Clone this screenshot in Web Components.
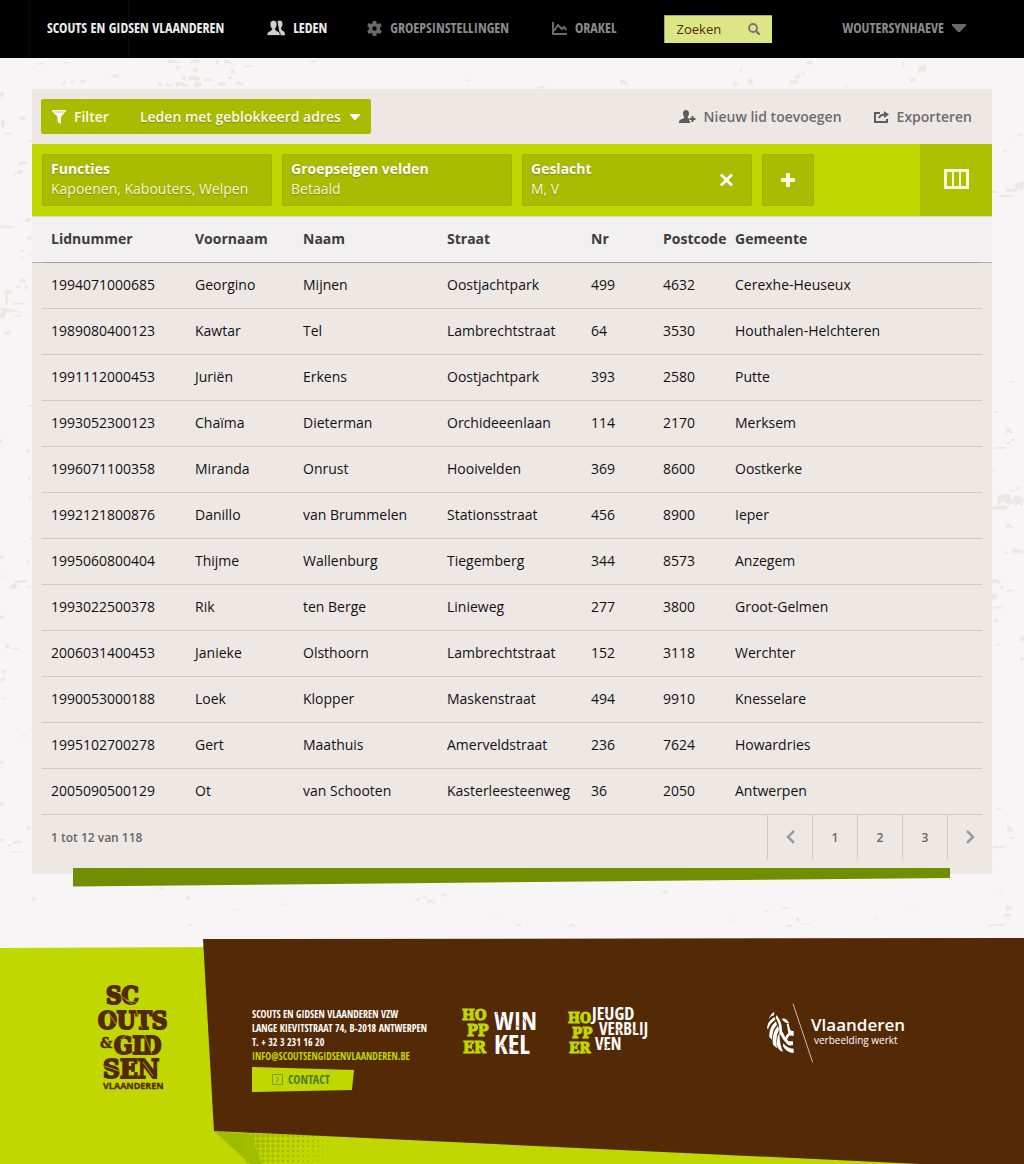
<!DOCTYPE html>
<html lang="nl">
<head>
<meta charset="utf-8">
<meta name="viewport" content="width=device-width, initial-scale=1">
<title>Scouts en Gidsen Vlaanderen - Leden</title>
<style>
html{height:100%}
body{margin:0;min-height:100%;background:#f7f5f6;font-family:"Open Sans","Noto Sans",sans-serif;font-size:14px;line-height:20px;color:#111;
--narrow:"Liberation Sans Narrow","Open Sans Condensed","Roboto Condensed","DejaVu Sans Condensed",sans-serif;
--lime:#c0d800;--olive:#a9bc00;--sand:#ede8e4;--brown:#542906}
</style>
</head>
<body>
<members-page></members-page>
<script>
const define=(name,html,setup)=>{
  const t=document.createElement('template');
  t.innerHTML='<style>*{box-sizing:border-box}button,input,select{font:inherit;color:inherit;margin:0;border:0;background:none;padding:0}button{cursor:pointer}a{color:inherit;text-decoration:none}svg{display:block;flex:none}</style>'+html;
  customElements.define(name,class extends HTMLElement{
    constructor(){super();this.attachShadow({mode:'open'}).append(t.content.cloneNode(true));}
    connectedCallback(){if(setup)setup(this,this.shadowRoot);}
  });
};

/* One menu entry: icon slot followed by its label */
define('nav-item',`<style>
:host{display:block;color:#8c8c8c}
:host([active]){color:#eee}
a{display:flex;align-items:center;gap:8px;white-space:nowrap}
</style><a href="#"><slot name="icon"></slot><slot></slot><slot name="after"></slot></a>`);

define('search-box',`<style>
:host{display:block}
form{display:flex;align-items:center;width:108px;height:28px;background:#dde685;border-top:1px solid #a6ad5c;border-left:1px solid #a6ad5c;padding:0 12px 2px;color:#542906;font:500 13px/20px "Open Sans",sans-serif}
input{flex:1;min-width:0;width:0;outline:0}
input::placeholder{color:#542906;opacity:1}
button{color:#777}
</style><form><input type="search" placeholder="Zoeken" aria-label="Zoeken"><button type="button" aria-label="Zoek"><svg width="12" height="12" viewBox="0 0 12 12" fill="none" stroke="currentColor"><circle cx="5" cy="5" r="4" stroke-width="1.8"/><path d="M8 8l3 3" stroke-width="2.4" stroke-linecap="round"/></svg></button></form>`);

define('top-bar',`<style>
:host{display:block;background:linear-gradient(90deg,#000 29px,#0c0c0c 29px 30px,#000 30px 128px,#0c0c0c 128px 129px,#000 129px)}
nav{display:flex;align-items:center;height:58px;padding:0 58px 2px 47px;font:bold 14px/20px var(--narrow);text-transform:uppercase}
.leden{margin-left:43px}.groep{margin-left:40px}.orakel{margin-left:43px}
search-box{margin-left:47px;text-transform:none;padding-top:2px}
.user{margin-left:auto}
</style><nav>
<nav-item active>Scouts en Gidsen Vlaanderen</nav-item>
<nav-item active class="leden"><svg slot="icon" width="18" height="16" viewBox="0 0 18 16" fill="#d0d0d0"><path d="M10.500 1.500c2-2 5-.8 5 2.200 0 2-.6 3.300-1.500 4.300.2 2 1.200 2.400 2.600 3.200 1 .6 1.400 1.800 1.400 4h-5z"/><path stroke="#000" stroke-width=".8" d="M3 4c0-5 7-5 7 0 0 2.300-.7 3.700-1.700 4.700 0 1.500.7 1.800 2.700 2.600 2 .8 2.200 2 2.200 4.200H0c0-2.200.4-3.400 2.200-4.200 1.800-.8 2.600-1.100 2.600-2.600C3.700 7.700 3 6.300 3 4z"/></svg>Leden</nav-item>
<nav-item class="groep"><svg slot="icon" width="15" height="15" viewBox="0 0 15 15" fill="#6a6a6a"><path fill-rule="evenodd" d="M5.800 0h3.400l.5 2.500 1.200.6 2.200-1.200 1.700 2.900L13 6.500v2l1.800 1.700-1.700 2.900-2.200-1.200-1.200.6-.5 2.500H5.800l-.5-2.500-1.200-.6-2.200 1.200-1.700-2.900L2 8.500v-2L.2 4.800l1.700-2.900 2.200 1.200 1.200-.6zM7.500 5.300a2.200 2.200 0 100 4.400 2.200 2.200 0 000-4.400z"/></svg>Groepsinstellingen</nav-item>
<nav-item class="orakel"><svg slot="icon" width="15" height="13" viewBox="0 0 15 13" fill="none" stroke="#6a6a6a" stroke-width="2"><path d="M1 0v12h14"/><path d="M2 9l4-6 4 4 2-2 2.500 3"/></svg>Orakel</nav-item>
<search-box></search-box>
<nav-item class="user">woutersynhaeve<svg slot="after" width="14" height="8" viewBox="0 0 14 8" fill="#6a6a6a"><path d="M0 0h14v1.500L8 8H6L0 1.500z"/></svg></nav-item>
</nav>`);

/* Panel header with the saved filter picker and the list actions */
define('list-toolbar',`<style>
:host{display:flex;align-items:center;justify-content:space-between;height:55px;padding:0 20px 0 9px;font-weight:600}
.picker{display:flex;align-items:center;height:35px;background:var(--olive);border-radius:2px;color:#fbfcee;text-shadow:0 1px 1px #7d8b00}
.filter{display:flex;align-items:center;gap:8px;padding:0 11px;height:35px}
.saved{position:relative;display:flex;align-items:center}
select{appearance:none;height:35px;width:251px;padding:0 30px 0 20px;text-shadow:inherit}
option{color:#111}
.saved svg{position:absolute;right:11px;pointer-events:none}
.actions{display:flex;gap:32px;color:#6c6c6c}
.actions button{display:flex;align-items:center;gap:8px}
</style>
<div class="picker"><button class="filter"><svg width="14" height="14" viewBox="0 0 14 14" fill="#fff"><path d="M0 0h14v1L9 7v7l-3.500-2V7L0 1z"/><path d="M2 2h10" stroke="#a9bc00" stroke-width=".7"/></svg>Filter</button>
<div class="saved"><select aria-label="Opgeslagen filter"><option>Leden met geblokkeerd adres</option></select><svg width="10" height="6" viewBox="0 0 10 6" fill="#fff"><path d="M0 0h10v1L5.500 6h-1L0 1z"/></svg></div></div>
<div class="actions">
<button><svg width="17" height="13" viewBox="0 0 17 13" fill="#5c5c5c"><path d="M4 3c0-4 6-4 6 0 0 2-.6 3-1.300 4 0 1 .6 1.300 2.300 2v4H0c0-2 .3-3 1.800-3.600C3.800 8.600 5.300 8.500 5.300 7 4.500 6 4 5 4 3z"/><path d="M14 5v8M10 9h7" stroke="#ede8e4" stroke-width="4"/><path d="M13.500 6v6M10.500 9h6" stroke="#5c5c5c" stroke-width="2"/></svg>Nieuw lid toevoegen</button>
<button><svg width="15" height="12" viewBox="0 0 15 12" fill="none" stroke="#5c5c5c" stroke-width="2"><path d="M6 2H1v9h12V8" /><path d="M5 7c1-2.500 3-3.500 6-3.500" stroke-width="2"/><path d="M10 0l5 3.500L10 7z" fill="#5c5c5c" stroke="none"/></svg>Exporteren</button></div>`);

define('filter-chip',`<style>
:host{display:flex;align-items:center;width:230px;height:52px;padding:0 18px 0 9px;background:var(--olive);border-radius:2px;color:#fff;box-shadow:inset 0 0 0 1px #a1b300;text-shadow:0 1px 1px #7d8b00}
div{flex:1;white-space:nowrap;padding-bottom:2px}
b,span{display:block}
span{color:#f7f9dc}
</style><div><b><slot name="title"></slot></b><span><slot></slot></span></div><slot name="close"></slot>`);

define('filter-strip',`<style>
:host{display:flex;justify-content:space-between;height:72px;background:var(--lime)}
.chips{display:flex;gap:10px;padding:10px}
button{display:grid;place-items:center}
.add{width:52px;height:52px;background:var(--olive);border-radius:2px;box-shadow:inset 0 0 0 1px #a1b300}
.cols{width:72px;height:72px;padding-bottom:2px;background:#acc000}
</style><div class="chips">
<filter-chip><span slot="title">Functies</span>Kapoenen, Kabouters, Welpen</filter-chip>
<filter-chip><span slot="title">Groepseigen velden</span>Betaald</filter-chip>
<filter-chip><span slot="title">Geslacht</span>M, V<button slot="close" aria-label="Verwijder"><svg width="15" height="14" viewBox="0 0 15 14"><path d="M2 1.500l11 11M13 1.500l-11 11" stroke="#fff" stroke-width="3"/></svg></button></filter-chip>
<button class="add" aria-label="Filter toevoegen"><svg width="14" height="14" viewBox="0 0 14 14"><path d="M7 0v14M0 7h14" stroke="#f6f9dc" stroke-width="4"/></svg></button></div>
<button class="cols" aria-label="Kolommen"><svg width="25" height="20" viewBox="0 0 25 20" fill="none" stroke="#f6f9dc"><path d="M1.500 1.500h22v17h-22z" stroke-width="3"/><path d="M9 2v16M16 2v16" stroke-width="2"/></svg></button>`);

define('member-table',`<style>
:host{display:block;padding:0 10px;background:linear-gradient(#dcdad8 1px,#f2f0f1 1px 46px,#b4b4b4 46px 47px,transparent 47px)}
table{width:100%;border-collapse:separate;border-spacing:0;table-layout:fixed}
th,td{padding:0 0 0 9px;text-align:left;white-space:nowrap}
th{height:47px;color:#3c3c3c;font-weight:700;border-bottom:1px solid #a0a0a0}
td{height:46px;padding-bottom:2px;border-bottom:1px solid #cbc9c6}
.c0{width:144px}.c1{width:108px}.c2{width:144px}.c3{width:144px}.c4{width:72px}.c5{width:72px}
</style><table><colgroup><col class="c0"><col class="c1"><col class="c2"><col class="c3"><col class="c4"><col class="c5"><col></colgroup><thead><tr></tr></thead><tbody></tbody></table>`,(el,root)=>{
  const fill=(row,tag,text)=>{for(const s of text.split('|')){const c=document.createElement(tag);c.textContent=s;if(tag==='th')c.scope='col';row.append(c);}};
  fill(root.querySelector('thead tr'),'th','Lidnummer|Voornaam|Naam|Straat|Nr|Postcode|Gemeente');
  const body=root.querySelector('tbody');
  for(const line of [
    '1994071000685|Georgino|Mijnen|Oostjachtpark|499|4632|Cerexhe-Heuseux',
    '1989080400123|Kawtar|Tel|Lambrechtstraat|64|3530|Houthalen-Helchteren',
    '1991112000453|Juriën|Erkens|Oostjachtpark|393|2580|Putte',
    '1993052300123|Chaïma|Dieterman|Orchideeenlaan|114|2170|Merksem',
    '1996071100358|Miranda|Onrust|Hooivelden|369|8600|Oostkerke',
    '1992121800876|Danillo|van Brummelen|Stationsstraat|456|8900|Ieper',
    '1995060800404|Thijme|Wallenburg|Tiegemberg|344|8573|Anzegem',
    '1993022500378|Rik|ten Berge|Linieweg|277|3800|Groot-Gelmen',
    '2006031400453|Janieke|Olsthoorn|Lambrechtstraat|152|3118|Werchter',
    '1990053000188|Loek|Klopper|Maskenstraat|494|9910|Knesselare',
    '1995102700278|Gert|Maathuis|Amerveldstraat|236|7624|Howardries',
    '2005090500129|Ot|van Schooten|Kasterleesteenweg|36|2050|Antwerpen'])
    fill(body.insertRow(),'td',line);
});

define('page-nav',`<style>
:host{display:flex;align-items:center;justify-content:space-between;height:44px;margin-bottom:15px;padding-left:19px;font-size:12px;font-weight:600;color:#666}
nav{display:flex}
span,a{padding-top:2px}
button,a{display:grid;place-items:center;width:45px;height:44px;border-left:1px solid #cbc9c6}
</style><span>1 tot 12 van 118</span><nav aria-label="Pagina's">
<button aria-label="Vorige"><svg width="11" height="14" viewBox="0 0 11 14" fill="none"><path d="M9 2L3 8l6 5.500" stroke="#fff" stroke-width="2"/><path d="M9 1L3 7l6 6" stroke="#999" stroke-width="2.500"/></svg></button>
<a href="#">1</a><a href="#">2</a><a href="#">3</a>
<button aria-label="Volgende"><svg width="11" height="14" viewBox="0 0 11 14" fill="none"><path d="M2 2l6 6-6 5.500" stroke="#fff" stroke-width="2"/><path d="M2 1l6 6-6 6" stroke="#999" stroke-width="2.500"/></svg></button></nav>`);

/* Flecks of worn paint on the page background */
define('paint-flecks',`<style>:host{position:absolute;inset:58px 0 auto;z-index:-1}svg{width:100%;height:880px}</style><svg viewBox="0 0 1024 880" preserveAspectRatio="none"><g fill="#ece7e5"></g></svg>`,(el,root)=>{
  const g=root.querySelector('g');
  /* x, y, width, height, slope */
  const spots=[
  [38,5,7,2,1],[63,4,7,2,-1],[111,16,8,5,-4],[62,23,4,5,-2],[71,23,4,3,0],[80,22,6,4,1],
  [167,2,13,4,2],[190,2,10,4,-2],[176,8,4,4,1],[190,10,8,5,-5],[188,18,12,6,2],[158,25,4,5,0],[165,26,8,3,1],[175,24,14,6,4],[182,18,4,5,0],[194,25,8,5,0],[204,20,9,4,2],[216,3,3,5,0],[224,2,8,5,3],[231,11,5,7,4],[228,19,4,3,0],[218,24,8,5,-1],[236,24,8,4,1],[245,7,8,3,-1],[310,3,7,2,0],[466,22,6,1,0],
  [536,28,9,3,-3],[620,22,9,6,5],[740,10,2,5,0],[733,25,5,4,1],[748,20,5,9,4],[790,22,8,6,-1],[794,17,6,5,-2],[801,15,4,2,0],[806,3,7,5,-1],[902,4,3,6,1],[918,8,9,8,-2],[910,20,6,6,-1],[843,28,6,1,0],
  [0,34,4,7,0],[1,62,4,10,1],[19,59,7,4,0],[5,75,7,2,0],[19,104,8,4,0],[14,112,9,6,-5],[22,103,4,2,0],[28,82,4,3,0],[22,160,9,6,-6],[0,168,15,3,0],[27,179,5,4,0],[21,192,3,3,0],[21,199,3,3,0],[28,196,5,2,-2],[4,232,8,5,-2],[20,220,6,6,2],[16,228,5,3,-1],[24,228,4,4,0],[5,236,3,15,0],[0,250,32,6,9],[13,245,13,2,0],[0,255,5,7,-1],[15,257,7,2,0],[3,273,8,5,-3],[28,347,4,3,0],[0,382,3,4,0],[26,391,5,5,1],[28,419,3,4,0],[28,439,3,3,0],[30,480,3,3,0],[27,502,3,4,0],[0,498,4,4,0],[1,518,5,1,0],[9,526,8,7,-3],[14,522,14,4,-2],[26,528,6,2,0],[5,586,5,6,2],[12,590,7,2,0],[0,558,4,4,0],[2,612,5,4,-1],[0,619,5,6,-3],[2,640,3,2,0],[22,677,4,2,0],[0,703,4,4,0],[0,744,4,5,0],[25,768,6,5,-5],[0,781,4,4,0],[7,786,5,3,-2],[13,783,9,4,0],[9,794,16,1,0],[32,840,4,4,0],
  [1014,76,9,2,-4],[1003,92,4,3,0],[1015,124,9,11,-3],[1005,131,12,4,1],[991,133,8,3,2],[999,137,15,3,1],[1009,323,5,2,0],[994,353,5,2,1],[1006,370,6,7,4],[1010,381,5,3,-1],[1006,384,4,3,-1],[993,389,14,3,-1],[992,412,4,1,0],[1016,429,4,3,-1],[1010,432,5,2,0],[997,436,14,13,-3],[992,448,16,5,-1],[1008,441,6,8,-1],[1014,438,10,13,2],[1006,466,7,5,3],[1005,494,4,2,0],[1012,491,12,6,2],[992,521,9,6,2],[1000,528,4,4,0],[992,536,5,8,0],[1006,532,8,2,0],[993,549,10,2,0],[993,561,5,5,-2],[1020,579,4,6,0],[996,586,4,2,0],[1020,600,4,4,0],
  [997,750,5,3,2],[1007,768,6,7,4],[1010,779,5,3,0],[992,788,14,3,-1],[993,809,4,1,0],[997,832,7,1,0],[1006,847,6,7,4],[1003,856,8,4,-1],[988,866,18,3,-1],
  [159,829,5,3,2],[186,838,4,5,2],[234,851,6,1,0],[283,846,6,1,0],[188,866,4,3,0],[415,840,5,4,-2],[423,839,4,2,0],[427,841,9,6,4],[440,836,7,3,-2],[441,826,6,1,0],[493,858,6,1,0],[517,866,4,3,0],[567,866,8,4,-4],[661,833,7,4,-3],[728,862,5,1,0],[765,852,4,3,0],[782,849,7,3,-1],[796,859,4,7,3],[786,867,7,3,0],[802,866,8,1,0],[875,860,5,1,0],[909,852,6,1,0]];
  g.innerHTML=spots.map(([x,y,w,h,s])=>`<path d="M${x} ${y+(s<0?-s:0)}Q${x+w*.4} ${y-1} ${x+w} ${y+(s>0?s:0)}Q${x+w*.9} ${y+h} ${x+w*.6} ${y+h*.7}T${x+w*.1} ${y+h}z"/>`).join('');
});

define('members-panel',`<style>
:host{display:block;padding:31px 32px 0}
section{background:var(--sand);padding-bottom:0;display:flow-root}
.edge{width:calc(100% - 83px);height:19px;margin:-6px 0 0 41px;position:relative}
</style><section><list-toolbar></list-toolbar><filter-strip></filter-strip><member-table></member-table><page-nav></page-nav></section>
<svg class="edge" viewBox="0 0 877 19" preserveAspectRatio="none"><path d="M0 0h877v10L0 18.500z" fill="#708f00"/></svg>`);

define('scouts-logo',`<style>:host{display:block}svg{overflow:visible}text{font-family:"DejaVu Serif Condensed","DejaVu Serif",serif;font-weight:bold;fill:#542906;stroke:#542906}.sans{font-family:"Open Sans",sans-serif}</style>
<svg width="70" height="107" viewBox="97 983 70 107" role="img">
<g font-size="24" stroke-width="2"><text x="106" y="1004">SC</text><text x="98" y="1029">OUTS</text><text x="114" y="1054">GID</text><text x="103" y="1078" font-size="26">SEN</text></g>
<text x="100" y="1048" font-size="15" stroke-width=".5">&amp;</text>
<text class="sans" x="103" y="1089" font-size="9" stroke-width=".3">VLAANDEREN</text>
<path d="M121 996l14 10M108 1012l8 12M136 1010l6 18M120 1040l8-6M144 1034l8 20M143 1062l10 14M104 1066l18 6M112 1034l12-4M126 1000l18 4" stroke="#c0d800" stroke-width=".7" fill="none"/>
</svg>`);

define('hopper-logo',`<style>:host{display:block}svg{overflow:visible}text{font-weight:bold}
.h{font-family:"DejaVu Serif Condensed","DejaVu Serif",serif;fill:#c0d800;stroke:#c0d800;stroke-width:1}
.w{font-family:var(--narrow);fill:#fff}</style>`,(el,root)=>{
  const art=document.createElement('div');
  art.innerHTML=el.hasAttribute('shop')
  ?`<svg width="70" height="52" viewBox="462 1006 70 52"><g class="h" font-size="16"><text class="h" x="462" y="1021" font-size="15">HO</text><text class="h" x="467" y="1037">PP</text><text class="h" x="463" y="1054">ER</text></g><g font-size="25"><text class="w" x="494" y="1031">WIN</text><text class="w" x="494" y="1055" font-size="27">KEL</text></g><path d="M496 1014l8 4M510 1026l12 2M500 1046l14 4M520 1014l6 10" stroke="#542906" stroke-width=".6"/></svg>`
  :`<svg width="84" height="52" viewBox="568 1006 84 52"><g class="h" font-size="15"><text class="h" x="568" y="1024" font-size="14">HO</text><text class="h" x="572" y="1039">PP</text><text class="h" x="569" y="1054">ER</text></g><g font-size="17"><text class="w" x="592" y="1021" font-size="18">JEUGD</text><text class="w" x="599" y="1036">VERBLIJ</text><text class="w" x="595" y="1051">VEN</text></g><path d="M600 1012l8 4M612 1030l12 2M600 1046l8 4M630 1028l6 6" stroke="#542906" stroke-width=".6"/></svg>`;
  root.append(art);
});

define('vlaanderen-logo',`<style>:host{display:flex;color:#fff}
div{margin-left:-2px;padding-top:13px;font:600 17px/18px "Open Sans",sans-serif}
small{display:block;font:400 10px/12px "Open Sans",sans-serif;padding-left:3px}</style>
<svg width="46" height="60" viewBox="50 40 138 180" fill="#fff"><path d="M55 88Q60 72 72 66L71 77Q60 80 55 88zM50 114Q52 94 73 82L75 90Q58 100 53 120zM57 142Q55 112 77 95L80 105Q65 120 65 150zM68 165Q63 130 83 108L86 120Q74 142 80 176zM80 168Q77 145 88 127Q86 160 98 186Q84 182 80 168zM78 76Q96 95 95 125Q106 140 109 162Q96 148 87 130Q88 100 76 84zM94 87Q108 84 116 100Q104 102 94 87zM114 100L119 118Q120 124 130 124V139Q120 135 114 142Q108 148 114 155H128V166Q112 171 106 158Q101 140 114 131Q112 115 109 104zM99 160Q108 176 130 177V190Q108 189 98 170z"/><path d="M128 42L187 218" stroke="#cbbdb0" stroke-width="3"/></svg>
<div>Vlaanderen<small>verbeelding werkt</small></div>`);

define('page-footer',`<style>
:host{display:block;position:relative;z-index:0;height:226px;margin-top:51px}
.bg{position:absolute;inset:0;width:100%;height:100%;z-index:-1}
.row{display:flex;align-items:flex-start;padding:45px 0 0 97px}
address{margin:24px 0 0 85px;width:166px;white-space:nowrap;font:bold 10px/14px var(--narrow);text-transform:uppercase;color:#fff}
address span,address a{display:block}
.mail{color:var(--lime)}
.contact{display:flex;align-items:center;gap:5px;width:102px;height:25px;margin-top:4px;padding-left:20px;background:var(--lime);color:#4c7a2c;font-size:12px;text-transform:uppercase;clip-path:polygon(0 0,100% 12%,98% 92%,0 100%)}
.shop{margin:22px 0 0 44px}.stay{margin:22px 0 0 36px}.vl{margin:20px 0 0 115px}
</style>
<svg class="bg" viewBox="0 0 1024 226" preserveAspectRatio="none">
<path d="M0 10L220 9V180H1024V226H0z" fill="#c0d800"/><path d="M214 193L250 226H262L250 196z" fill="#9fbb00"/><g class="dots" fill="#a3be00"></g><path d="M203 1L1024 0V226H920L214 193z" fill="#542906"/></svg>
<div class="row"><scouts-logo></scouts-logo>
<address><span>Scouts en Gidsen Vlaanderen vzw</span><span>Lange Kievitstraat 74, B-2018 Antwerpen</span><span>T. + 32 3 231 16 20</span><a class="mail" href="#">info@scoutsengidsenvlaanderen.be</a>
<button class="contact"><svg width="11" height="11" viewBox="0 0 11 11" fill="none" stroke="#7e9f10"><path d="M.5.5h10v10H.5z"/><path d="M4 3l3 2.500L4 8"/></svg>Contact</button></address>
<hopper-logo shop class="shop"></hopper-logo><hopper-logo class="stay"></hopper-logo><vlaanderen-logo class="vl"></vlaanderen-logo></div>`,(el,root)=>{
  let dots='';
  for(let x=248;x<346;x+=5)for(let y=193;y<228;y+=5){const r=2.7-(x-248)/42-(y-198)/60;if(r>.3)dots+=`<circle cx="${x}" cy="${y}" r="${r.toFixed(1)}"/>`;}
  root.querySelector('.dots').innerHTML=dots;
});

define('members-page',`<style>:host{display:block;position:relative;z-index:0}main,header{display:block}</style><paint-flecks></paint-flecks><header><top-bar></top-bar></header><main><members-panel></members-panel></main><footer><page-footer></page-footer></footer>`);
</script>
</body>
</html>
